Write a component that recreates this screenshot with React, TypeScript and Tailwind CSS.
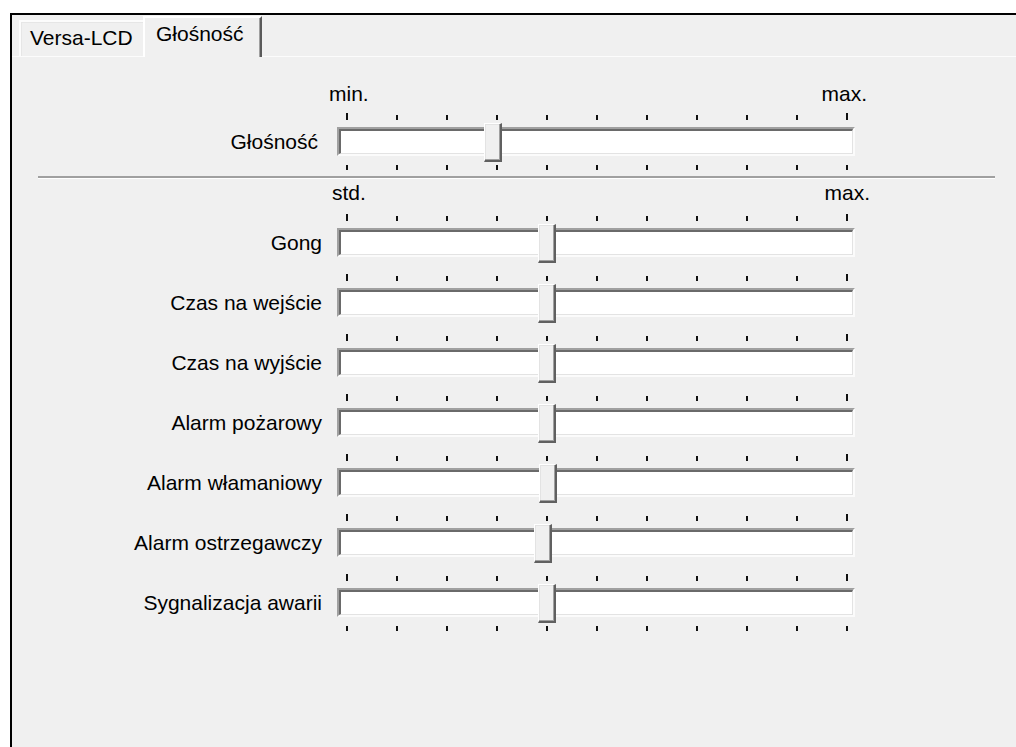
import React from "react";

const TICKS = Array.from({ length: 11 }, (_, i) => i);

const ROWS = [
  { label: "Gong", thumb: 201 },
  { label: "Czas na wejście", thumb: 201 },
  { label: "Czas na wyjście", thumb: 201 },
  { label: "Alarm pożarowy", thumb: 201 },
  { label: "Alarm włamaniowy", thumb: 202 },
  { label: "Alarm ostrzegawczy", thumb: 197 },
  { label: "Sygnalizacja awarii", thumb: 201 },
];

function Ticks({ top }: { top: boolean }) {
  return (
    <div
      className={
        top
          ? "ml-[325px] flex h-[7px] w-[518px] items-end justify-between pl-[9px] pr-[7px]"
          : "ml-[325px] flex h-[5px] w-[518px] items-start justify-between pl-[9px] pr-[7px]"
      }
    >
      {TICKS.map((i) => {
        const edge = top && (i === 0 || i === 10);
        return <div key={i} className={edge ? "h-[7px] w-[2px] bg-[#111]" : "h-[5px] w-[2px] bg-[#111]"} />;
      })}
    </div>
  );
}

function Track({ label, thumb, pad }: { label: string; thumb: number; pad: string }) {
  return (
    <div className="flex h-[29px] items-center">
      <div className={`w-[325px] text-right ${pad}`}>{label}</div>
      <div className="relative h-[29px] w-[518px] border-2 border-[#a0a0a0] border-r-[#fbfbfb] border-b-[#fbfbfb]">
        <div className="h-full border-t-2 border-l-2 border-r border-b border-[#6a6a6a] border-r-[#e3e3e3] border-b-[#e3e3e3] bg-white" />
        {/* thumb */}
        <div
          className="absolute top-[-6px] h-[39px] w-[18px] border-t border-l border-white border-r-2 border-b-2 border-r-[#606060] border-b-[#606060]"
          style={{ left: thumb - 2 }}
        >
          <div className="h-full border-r border-b border-[#a0a0a0] bg-[#f0f0f0] shadow-[inset_1px_1px_0_#e3e3e3]" />
        </div>
      </div>
    </div>
  );
}

export default function App() {
  return (
    <div className="h-[747px] w-[1016px] overflow-hidden bg-white pl-[10px] pt-[13px] font-['Liberation_Sans',Arial,sans-serif] text-[21px] leading-[24px] text-black">
      <div className="flex h-full flex-col border-t-2 border-l-2 border-black bg-[#f0f0f0]">
        {/* tab strip */}
        <div className="flex h-[41px] items-end pl-[7px]">
          <div className="h-[36px] w-[124px] border-t-2 border-l-2 border-[#fcfcfc] pl-[9px] pt-[4px] shadow-[inset_1px_1px_0_#e6e6e6]">
            Versa-LCD
          </div>
          <div className="relative z-10 -mb-[1px] h-[41px] w-[119px] border-t-2 border-l-2 border-white border-r-2 border-r-[#5a5a5a] bg-[#f0f0f0] pl-[11px] pt-[4px] shadow-[inset_-1px_0_0_#a0a0a0]">
            Głośność
          </div>
        </div>

        {/* panel */}
        <div className="flex-1 border-t border-[#fcfcfc]">
          <div className="ml-[317px] mt-[25px] flex h-[24px] w-[538px] justify-between">
            <span>min.</span>
            <span>max.</span>
          </div>
          <div className="mt-[7px]">
            <Ticks top />
          </div>
          <div className="mt-[7px]">
            <Track label="Głośność" thumb={147} pad="pr-[19px]" />
          </div>
          <div className="mt-[9px]">
            <Ticks top={false} />
          </div>

          <div className="ml-[26px] mt-[6px] h-[3px] w-[957px] border-t-2 border-b border-[#a0a0a0] border-b-white" />

          <div className="ml-[320px] mt-[2px] flex h-[24px] w-[538px] justify-between">
            <span>std.</span>
            <span>max.</span>
          </div>

          <div className="mt-[9px] flex flex-col gap-[17px]">
            {ROWS.map((r) => (
              <div key={r.label} className="flex flex-col gap-[7px]">
                <Ticks top />
                <Track label={r.label} thumb={r.thumb} pad="pr-[15px]" />
              </div>
            ))}
          </div>
          <div className="mt-[9px]">
            <Ticks top={false} />
          </div>
        </div>
      </div>
    </div>
  );
}
